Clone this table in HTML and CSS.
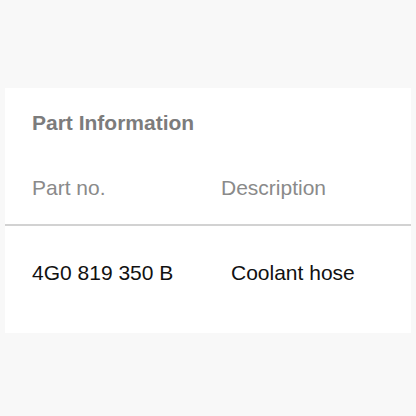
FILE: index.html
```html
<!DOCTYPE html>
<html>
<head>
<title>Part Information</title>
<link rel="stylesheet" href="styles.css">
</head>
<body>
    <div class="card">
        <h2 class="card-title">Part Information</h2>
        <div class="head-row">
            <span class="col-part">Part no.</span>
            <span>Description</span>
        </div>
        <div class="data-row">
            <span class="col-part">4G0 819 350 B</span>
            <span>Coolant hose</span>
        </div>
    </div>
</body>
</html>
```

FILE: styles.css
```css
body
{
margin: 0;
padding: 88px 5px 0 5px;
background-color: #f8f8f8;
font-family: "Liberation Sans", Arial, sans-serif;
font-size: 21px;
line-height: 24px;
}
.card {
            background-color: white;
            padding: 23px 0 48px 0;
        }
        .card-title {
            margin: 0 0 41px 0;
            padding: 0 27px;
            font-size: 21px;
            font-weight: bold;
            color: #7c7c7c;
        }
        .head-row {
            display: flex;
            padding: 0 27px 24px 27px;
            border-bottom: 2px solid #d2d2d2;
            color: #8a8a8a;
        }
        .head-row .col-part {
            width: 189px;
        }
        .data-row {
            display: flex;
            padding: 35px 27px 0 27px;
            color: #111;
        }
        .data-row .col-part {
            width: 199px;
        }
```
